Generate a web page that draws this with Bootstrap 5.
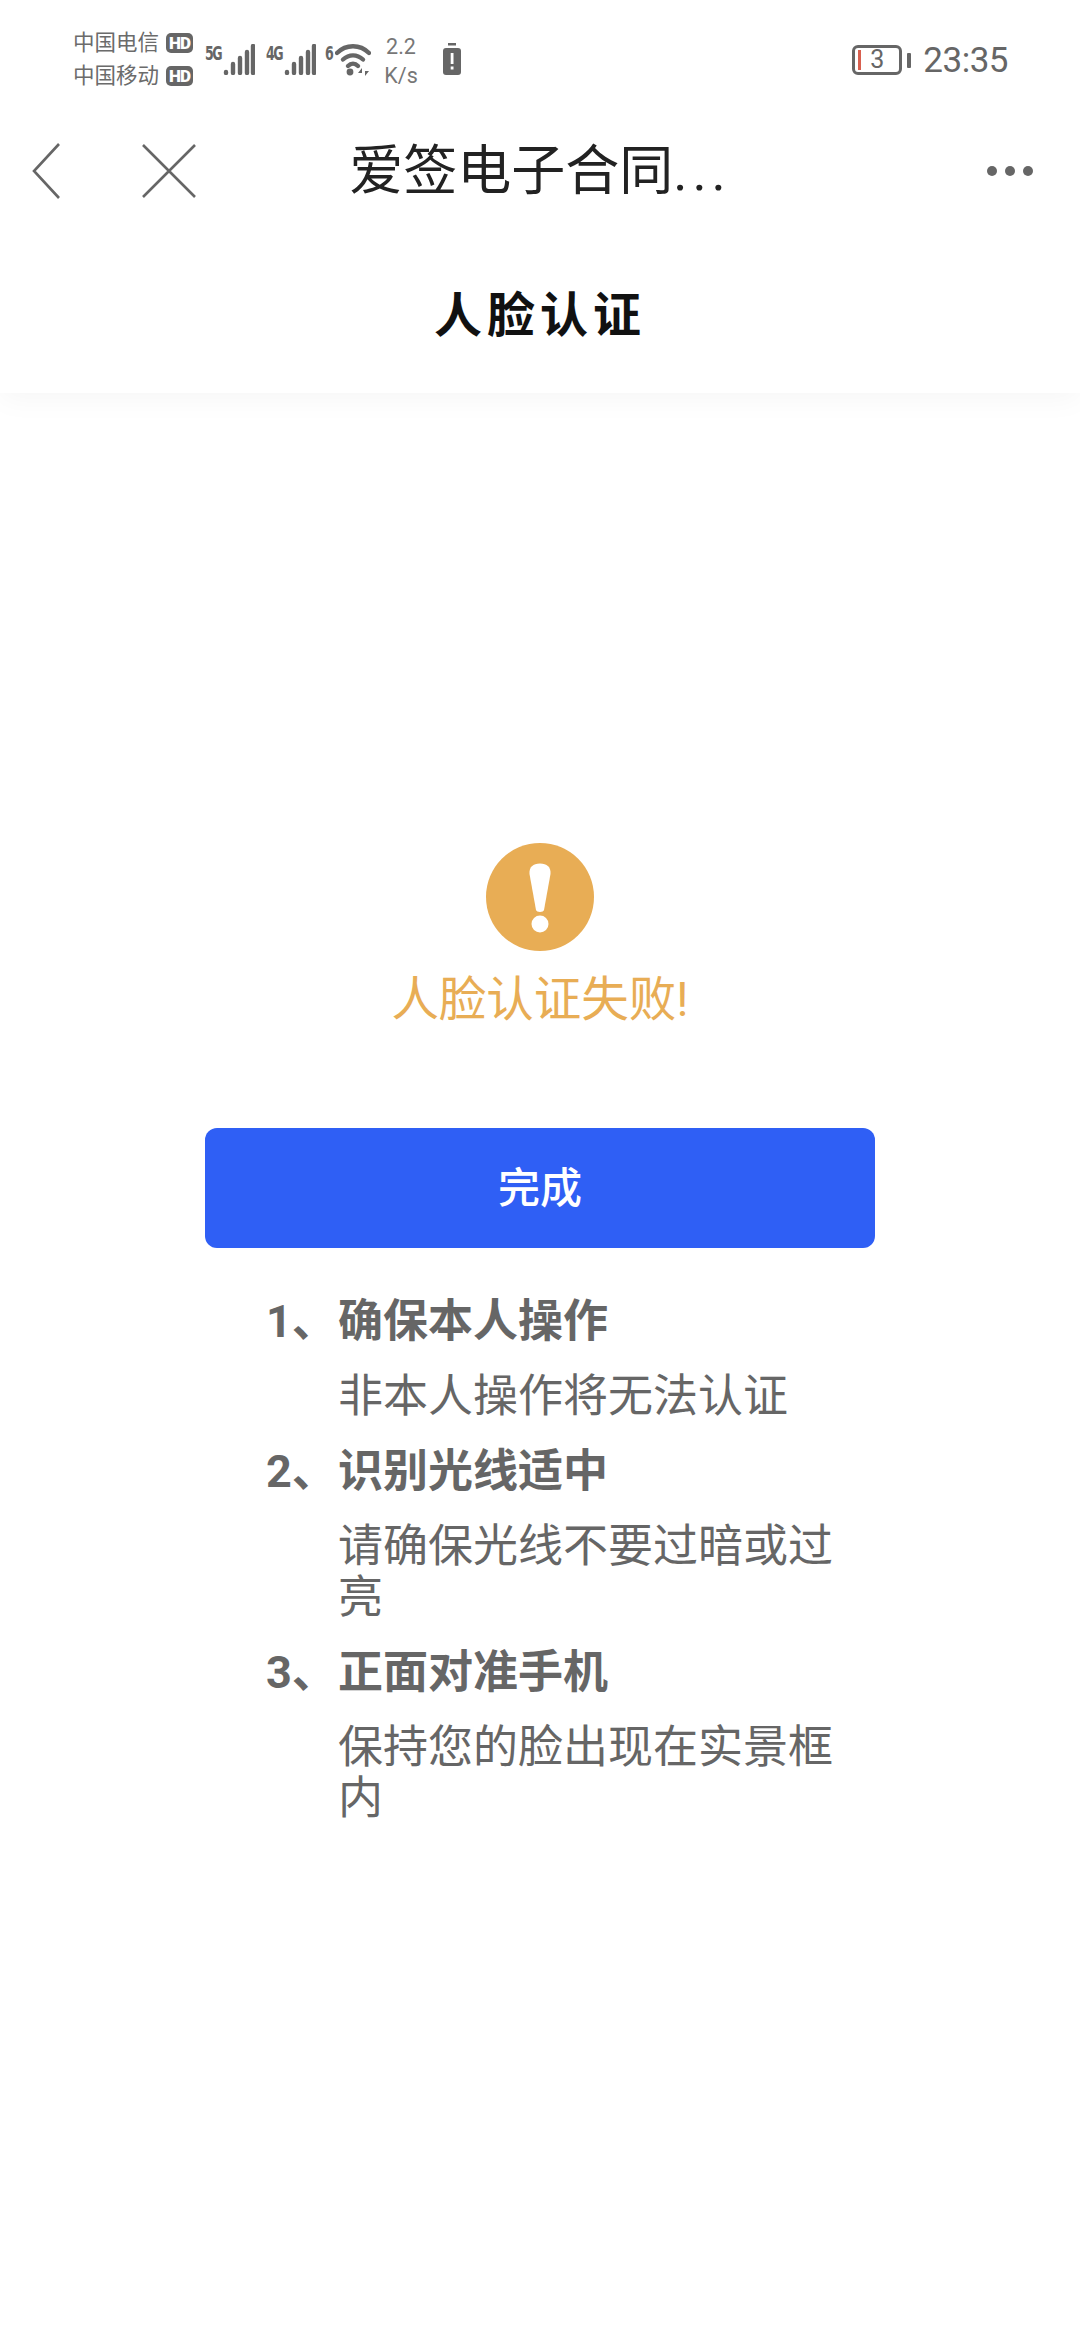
<!DOCTYPE html>
<html lang="zh-CN">
<head>
<meta charset="utf-8">
<title>人脸认证</title>
<link rel="stylesheet" href="https://cdn.jsdelivr.net/npm/bootstrap@5.3.0/dist/css/bootstrap.min.css">
<style>
html,body{background:#fff;}
body{width:1080px;height:2340px;overflow:hidden;font-family:Roboto,"Noto Sans CJK SC",sans-serif;color:#666;}
.head-box{height:393px;background:#fff;box-shadow:0 6px 28px rgba(0,0,0,.04);}
.status-row{height:115px;padding:32px 72px 0 73px;}
.carrier-col{width:120px;gap:11px;font-size:21.500px;line-height:22px;color:#6b6b6b;}
.carrier-line{gap:7px;}
.hd-tag{width:27px;height:20px;border-radius:5px;background:#666;color:#fff;font-size:17px;line-height:20px;font-weight:900;text-align:center;letter-spacing:-1px;}
.signal-wrap{margin-top:12px;margin-left:11px;}
.signal-wrap.first-net{margin-left:12px;}
.signal-wrap.wifi-net{margin-left:9px;}
.net-tag{display:inline-block;width:17px;font-family:"DejaVu Sans Condensed","DejaVu Sans",sans-serif;font-size:14px;line-height:14px;font-weight:700;color:#666;letter-spacing:-1.5px;white-space:nowrap;transform:scaleY(1.35);transform-origin:top left;}
.net-tag.single-char{width:8px;letter-spacing:0;}
.wifi-svg{margin-left:2px;}
.speed-box{width:40px;margin-left:10px;font-size:21.500px;line-height:29px;color:#777;text-align:center;}
.saver-svg{margin:11px 0 0 22px;}
.right-group{margin-top:7px;}
.battery-shell{width:50px;height:30px;border:3px solid #666;border-radius:6px;font-size:25px;line-height:24px;color:#666;text-align:center;position:relative;}
.battery-low{position:absolute;left:3px;top:2px;width:3px;height:20px;background:#d8604f;}
.battery-nub{width:4px;height:15px;background:#666;border-radius:1px;margin-left:5px;}
.clock-text{font-size:35px;line-height:40px;color:#666;margin-left:12px;margin-top:2px;letter-spacing:-.5px;}
.nav-row{height:115px;padding:0 32px 4px 32px;grid-template-columns:1fr auto 1fr;align-items:center;}
.nav-left{gap:82px;}
.nav-title{font-size:54px;line-height:60px;color:#222;margin-top:3px;}
.title-dots{letter-spacing:5px;}
.nav-more{gap:8px;justify-self:end;margin-right:15px;}
.more-dot{width:10px;height:10px;border-radius:50%;background:#666;}
.page-heading{font-size:48px;line-height:56px;font-weight:700;color:#111;letter-spacing:5px;height:163px;padding-top:58px;text-align:center;margin:0;}
.result-box{padding-top:450px;}
.warn-disc{width:108px;height:108px;}
.warn-text{font-size:47.500px;line-height:54px;color:#e8ad55;margin-top:22px;}
.done-btn{width:670px;height:120px;margin-top:101px;background:#2f5ff5;border:0;border-radius:12px;color:#fff;font-size:42px;font-weight:500;padding:0;}
.done-btn:hover{background:#2f5ff5;color:#fff;}
.tips-box{width:670px;margin-top:48px;padding-left:61px;font-size:45px;line-height:51px;}
.tip-item{display:flex;margin-bottom:24px;}
.tip-num{width:72px;flex:none;font-weight:700;}
.tip-head{font-weight:700;margin-bottom:24px;}
.tip-desc{width:510px;margin:0;}
</style>
</head>
<body>
<header class="head-box">
  <div class="status-row d-flex align-items-start">
    <div class="carrier-col d-flex flex-column">
      <div class="carrier-line d-flex align-items-center"><span>中国电信</span><span class="hd-tag">HD</span></div>
      <div class="carrier-line d-flex align-items-center"><span>中国移动</span><span class="hd-tag">HD</span></div>
    </div>
    <div class="signal-wrap first-net d-flex align-items-start">
      <span class="net-tag">5G</span>
      <svg width="33" height="31" viewBox="0 0 33 31" aria-hidden="true"><g stroke="#666" stroke-width="4.400" stroke-linecap="round"><path d="M4 28v1M11 20v9M18 14v15M25 8v21M31 2v27"/></g></svg>
    </div>
    <div class="signal-wrap d-flex align-items-start">
      <span class="net-tag">4G</span>
      <svg width="33" height="31" viewBox="0 0 33 31" aria-hidden="true"><g stroke="#666" stroke-width="4.400" stroke-linecap="round"><path d="M4 28v1M11 20v9M18 14v15M25 8v21M31 2v27"/></g></svg>
    </div>
    <div class="signal-wrap wifi-net d-flex align-items-start">
      <span class="net-tag single-char">6</span>
      <svg class="wifi-svg" width="36" height="33" viewBox="0 0 36 33" aria-hidden="true"><g fill="none" stroke="#666" stroke-width="4.400" stroke-linecap="round"><path d="M2 9C11 0 25 0 34 9"/><path d="M8 15.500C14 10 22 10 28 15.500"/><path d="M13 22C16 19 20 19 23 22"/></g><circle cx="15" cy="28" r="3.400" fill="#666"/><path d="M27 24l-4 5h4v3zM30 32l4-5h-4v-3z" fill="#666"/></svg>
    </div>
    <div class="speed-box">2.2<br>K/s</div>
    <svg class="saver-svg" width="18" height="33" viewBox="0 0 18 33" aria-hidden="true"><rect x="5" y="0" width="8" height="2.500" fill="#666"/><rect x="0" y="5" width="18" height="27" rx="3" fill="#666"/><rect x="7.700" y="10" width="2.800" height="11" fill="#fff"/><rect x="7.700" y="23.500" width="2.800" height="3" fill="#fff"/></svg>
    <div class="right-group d-flex align-items-center ms-auto">
      <div class="battery-shell"><span class="battery-low"></span>3</div>
      <span class="battery-nub"></span>
      <span class="clock-text">23:35</span>
    </div>
  </div>
  <nav class="nav-row d-grid">
    <div class="nav-left d-flex align-items-center">
      <svg width="28" height="56" viewBox="0 0 28 56" aria-hidden="true"><path d="M27 1L2 28l25 27" fill="none" stroke="#666" stroke-width="2.600"/></svg>
      <svg width="54" height="54" viewBox="0 0 54 54" aria-hidden="true"><path d="M1 1l52 52M53 1L1 53" fill="none" stroke="#666" stroke-width="2.600"/></svg>
    </div>
    <div class="nav-title">爱签电子合同<span class="title-dots">...</span></div>
    <div class="nav-more d-flex"><span class="more-dot"></span><span class="more-dot"></span><span class="more-dot"></span></div>
  </nav>
  <h1 class="page-heading">人脸认证</h1>
</header>
<main class="result-box d-flex flex-column align-items-center">
  <svg class="warn-disc" viewBox="0 0 108 108" aria-hidden="true"><circle cx="54" cy="54" r="54" fill="#e8ad55"/><path d="M43.500 31C43 24 47 20.500 54 20.500S65 24 64.500 31L58 67C57.500 69.500 50.500 69.500 50 67Z" fill="#fff"/><circle cx="54" cy="81" r="8.500" fill="#fff"/></svg>
  <div class="warn-text">人脸认证失败!</div>
  <button type="button" class="btn done-btn">完成</button>
  <div class="tips-box">
    <div class="tip-item"><span class="tip-num">1、</span><div><div class="tip-head">确保本人操作</div><p class="tip-desc">非本人操作将无法认证</p></div></div>
    <div class="tip-item"><span class="tip-num">2、</span><div><div class="tip-head">识别光线适中</div><p class="tip-desc">请确保光线不要过暗或过亮</p></div></div>
    <div class="tip-item"><span class="tip-num">3、</span><div><div class="tip-head">正面对准手机</div><p class="tip-desc">保持您的脸出现在实景框内</p></div></div>
  </div>
</main>
</body>
</html>
